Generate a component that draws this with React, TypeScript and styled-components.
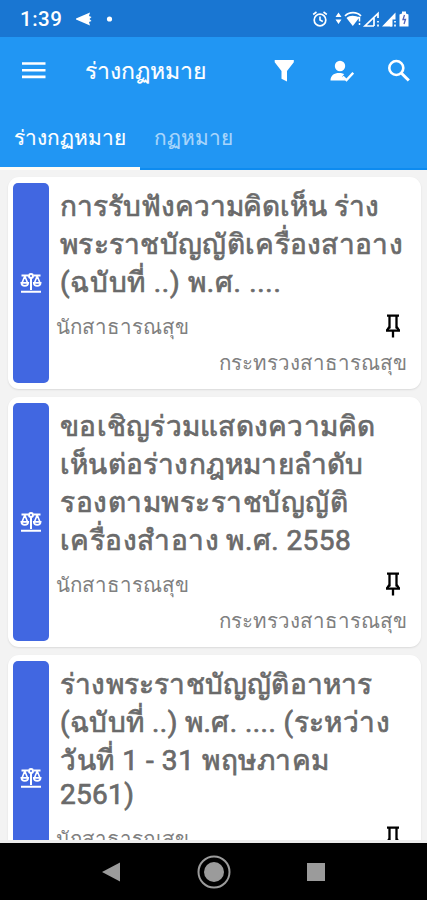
import React from 'react';
import styled, { createGlobalStyle } from 'styled-components';

const Global = createGlobalStyle`
  * { box-sizing: border-box; }
  html, body { margin: 0; padding: 0; background: #f3f3f3; }
  body { font-family: Roboto, sans-serif; }
`;

const Screen = styled.div`
  width: 427px;
  height: 900px;
  display: flex;
  flex-direction: column;
  overflow: hidden;
  background: #f3f3f3;
`;

const StatusBar = styled.header`
  height: 37px;
  flex: none;
  background: #1976d2;
  display: flex;
  align-items: center;
  padding: 0 17px 0 20px;
  color: #fff;
`;

const Clock = styled.span`
  font-size: 20.5px;
  font-weight: 500;
  letter-spacing: 0.5px;
  line-height: 37px;
  width: 56px;
  padding-top: 1px;
`;

const StatusIcons = styled.div`
  margin-left: auto;
  height: 18px;
  svg { display: block; }
`;

const Header = styled.div`
  height: 133px;
  flex: none;
  background: #2196f3;
  color: #fff;
  border-bottom: 2px solid #0d8bf0;
  display: flex;
  flex-direction: column;
`;

const Toolbar = styled.div`
  height: 68px;
  display: flex;
  align-items: center;
  padding: 0 16px 0 20px;
  svg { display: block; flex: none; }
`;

const AppTitle = styled.h1`
  margin: 1px 0 0 38px;
  width: 180px;
  font-size: 23px;
  font-weight: 400;
  line-height: 40px;
  white-space: nowrap;
  -webkit-text-stroke: 0.15px currentColor;
`;

const Actions = styled.div`
  display: flex;
  align-items: center;
  gap: 33px;
  margin-left: auto;
`;

const Tabs = styled.nav`
  display: flex;
  height: 65px;
  margin-bottom: -2px;
`;

const Tab = styled.div<{ $active?: boolean }>`
  height: 65px;
  padding: 13px 14px 0;
  width: ${p => (p.$active ? '140px' : '107px')};
  line-height: 40px;
  font-size: 20.8px;
  white-space: nowrap;
  color: ${p => (p.$active ? '#fff' : '#a8d5fb')};
  border-bottom: ${p => (p.$active ? '3px solid #fffdf6' : '0')};
  -webkit-text-stroke: 0.15px currentColor;
`;

const List = styled.main`
  height: 673px;
  flex: none;
  overflow: hidden;
  padding: 7px 6px 0 8px;
  display: flex;
  flex-direction: column;
  gap: 8px;
  border-bottom: 3px solid #ececec;
`;

const Card = styled.article<{ $height: number }>`
  height: ${p => p.$height}px;
  flex: none;
  display: flex;
  padding: 6px 14px 6px 5px;
  background: #fff;
  border-radius: 11px;
  box-shadow: 0 1px 2px rgba(0, 0, 0, 0.1);
`;

const Stripe = styled.div`
  width: 36px;
  flex: none;
  border-radius: 5px;
  background: #4167e1;
  display: flex;
  align-items: center;
  justify-content: center;
`;

const Body = styled.div`
  flex: 1;
  display: flex;
  flex-direction: column;
  padding: 4.5px 0 0 7px;
`;

const Title = styled.h2`
  margin: 0 0 0 4px;
  font-size: 28px;
  font-weight: 400;
  color: #6a6a6a;
  -webkit-text-stroke: 0.7px #6a6a6a;
`;

const Line = styled.span<{ $spacing?: number; $latin?: boolean }>`
  display: block;
  height: ${p => (p.$latin ? 34 : 38.3)}px;
  line-height: ${p => (p.$latin ? 30 : 38.3)}px;
  letter-spacing: ${p => p.$spacing ?? 0.3}px;
  white-space: nowrap;
`;

const Meta = styled.div`
  display: flex;
  justify-content: space-between;
  align-items: center;
  height: 36px;
  margin-top: 6.5px;
  padding-right: 6px;
  svg { display: block; margin-top: -2px; }
`;

const Small = styled.span<{ $right?: boolean }>`
  font-size: 20.5px;
  line-height: 36px;
  color: #808080;
  white-space: nowrap;
  align-self: ${p => (p.$right ? 'flex-end' : 'auto')};
`;

const NavBar = styled.footer`
  flex: 1;
  background: #000;
  display: flex;
  justify-content: center;
  align-items: center;
  svg { display: block; }
`;

const Scales = () => (
  <svg width="22" height="22" viewBox="0 0 22 22" fill="none" stroke="#fff" strokeWidth="2">
    <path d="M1.500 3.500h6.700M13.800 3.500h6.700M11 6v12M1 19.800h20" />
    <circle cx="11" cy="4" r="2" />
    <path d="M4.800 4 2 11M4.800 4 7.600 11M17.200 4 14.400 11M17.200 4 20 11" strokeWidth="1.600" />
    <path d="M1.400 10.800h6.800c-.2 4.200-6.600 4.200-6.800 0ZM13.800 10.800h6.800c-.2 4.200-6.600 4.200-6.800 0Z" strokeWidth="1.800" />
  </svg>
);

const Pin = () => (
  <svg width="16" height="26" viewBox="0 0 16 26" fill="none" stroke="#000" strokeWidth="2.300">
    <path d="M2 2.600h12M4.500 2.600v13M11.500 2.600v13M1 17.600h14M8 17.500v7" />
    <path d="M4.300 14 2 17.500M11.700 14l2.300 3.500" />
  </svg>
);

type Entry = { height: number; lines: { text: string; spacing?: number; latin?: boolean }[] };

const entries: Entry[] = [
  {
    height: 212,
    lines: [
      { text: 'การรับฟังความคิดเห็น ร่าง', spacing: -0.05 },
      { text: 'พระราชบัญญัติเครื่องสาอาง' },
      { text: '(ฉบับที่ ..) พ.ศ. ....', spacing: 0.7 },
    ],
  },
  {
    height: 250,
    lines: [
      { text: 'ขอเชิญร่วมแสดงความคิด', spacing: 0.25 },
      { text: 'เห็นต่อร่างกฎหมายลำดับ', spacing: 0.2 },
      { text: 'รองตามพระราชบัญญัติ', spacing: 0.5 },
      { text: 'เครื่องสำอาง พ.ศ. 2558', spacing: 0.45 },
    ],
  },
  {
    height: 246,
    lines: [
      { text: 'ร่างพระราชบัญญัติอาหาร', spacing: 0.2 },
      { text: '(ฉบับที่ ..) พ.ศ. .... (ระหว่าง', spacing: 0.42 },
      { text: 'วันที่ 1 - 31 พฤษภาคม', spacing: 0.57 },
      { text: '2561)', latin: true },
    ],
  },
];

export default function App() {
  return (
    <Screen>
      <Global />
      <StatusBar>
        <Clock>1:39</Clock>
        <svg width="40" height="18" viewBox="0 0 40 18" fill="#fff">
          <path d="M-1 9 14 2.500 13 6l2.500 1-2 2 2 2-2.500 1 1 3.500Z" />
          <circle cx="33.500" cy="9" r="2.600" />
        </svg>
        <StatusIcons>
          <svg width="98" height="18" viewBox="0 0 98 18" fill="none" stroke="#fff">
            <circle cx="8" cy="10" r="5.800" strokeWidth="1.700" />
            <path d="M8 6.500V10l2.800 1.500M1.200 4.500 4.500 2M11.500 2l3.300 2.500" strokeWidth="1.600" />
            <path d="M26.500 2.500 29.500 7h-6ZM26.500 14 29.500 9.500h-6Z" fill="#fff" stroke="none" />
            <path d="M33 6c4-4.500 12-4.500 16 0" strokeWidth="1.600" />
            <path d="M34.500 8c3-3 9-3 12.500 0l-6.200 8Z" fill="#fff" stroke="none" />
            <path d="M43 7.500h4.500v4M47.500 13v2" strokeWidth="1.500" />
            <path d="M66 8V3.500L53 16h9M62 8v8M66 11v1.500M66 14.500v2" strokeWidth="1.700" />
            <path d="M70 16.500 83.500 2.500v7h-3v7Z" fill="#fff" stroke="none" />
            <path d="M83 11v1.500M83 14.500v2M79 12v4.500" strokeWidth="1.700" />
            <path d="M87.500 4.500 90 3.500V1.500h4v2l2.500 1v12h-9Z" fill="#fff" stroke="none" />
            <path d="M92.500 5 91 9.500h2.500L92 14" stroke="#5263bb" strokeWidth="1.300" />
          </svg>
        </StatusIcons>
      </StatusBar>
      <Header>
        <Toolbar>
          <svg width="27" height="20" viewBox="0 0 27 20" stroke="#fff" strokeWidth="2.600">
            <path d="M2 2.500h23.500M2 9.200h23.500M2 15.900h23.500" />
          </svg>
          <AppTitle>ร่างกฏหมาย</AppTitle>
          <Actions>
            <svg width="22" height="24" viewBox="0 0 22 24" fill="#fff">
              <path d="M1.700 1h19.100v2.200l-6.800 8.800V22.500l-5.500-2.700V12L1.700 3.200Z" />
            </svg>
            <svg width="26" height="24" viewBox="0 0 26 24" fill="#fff">
              <circle cx="12" cy="7" r="5.200" />
              <path d="M2.500 21.500c0-5.200 3.800-7.600 8.500-7.600 2.300 0 3.800.4 5.200 1.200l-2 2.300 3.600 4.100Z" />
              <path d="m14.800 17.500 3.700 3.500 6.700-7.200" fill="none" stroke="#fff" strokeWidth="2.300" />
            </svg>
            <svg width="24" height="24" viewBox="0 0 24 24" fill="none" stroke="#fff">
              <circle cx="9.300" cy="9" r="7" strokeWidth="2.600" />
              <path d="m14.500 14.200 7.300 7.300" strokeWidth="3" />
            </svg>
          </Actions>
        </Toolbar>
        <Tabs>
          <Tab $active>ร่างกฏหมาย</Tab>
          <Tab>กฏหมาย</Tab>
        </Tabs>
      </Header>
      <List>
        {entries.map((entry, i) => (
          <Card key={i} $height={entry.height}>
            <Stripe><Scales /></Stripe>
            <Body>
              <Title>
                {entry.lines.map(l => (
                  <Line key={l.text} $spacing={l.spacing} $latin={l.latin}>{l.text}</Line>
                ))}
              </Title>
              <Meta>
                <Small>นักสาธารณสุข</Small>
                <Pin />
              </Meta>
              <Small $right>กระทรวงสาธารณสุข</Small>
            </Body>
          </Card>
        ))}
      </List>
      <NavBar>
        <svg width="240" height="40" viewBox="0 0 240 40" fill="#9b9b9b">
          <path d="M8 20 26 10.500v19Z" />
          <circle cx="120" cy="20" r="10" />
          <circle cx="120" cy="20" r="15.500" fill="none" stroke="#9b9b9b" strokeWidth="2" />
          <rect x="213" y="11" width="18" height="18" />
        </svg>
      </NavBar>
    </Screen>
  );
}
